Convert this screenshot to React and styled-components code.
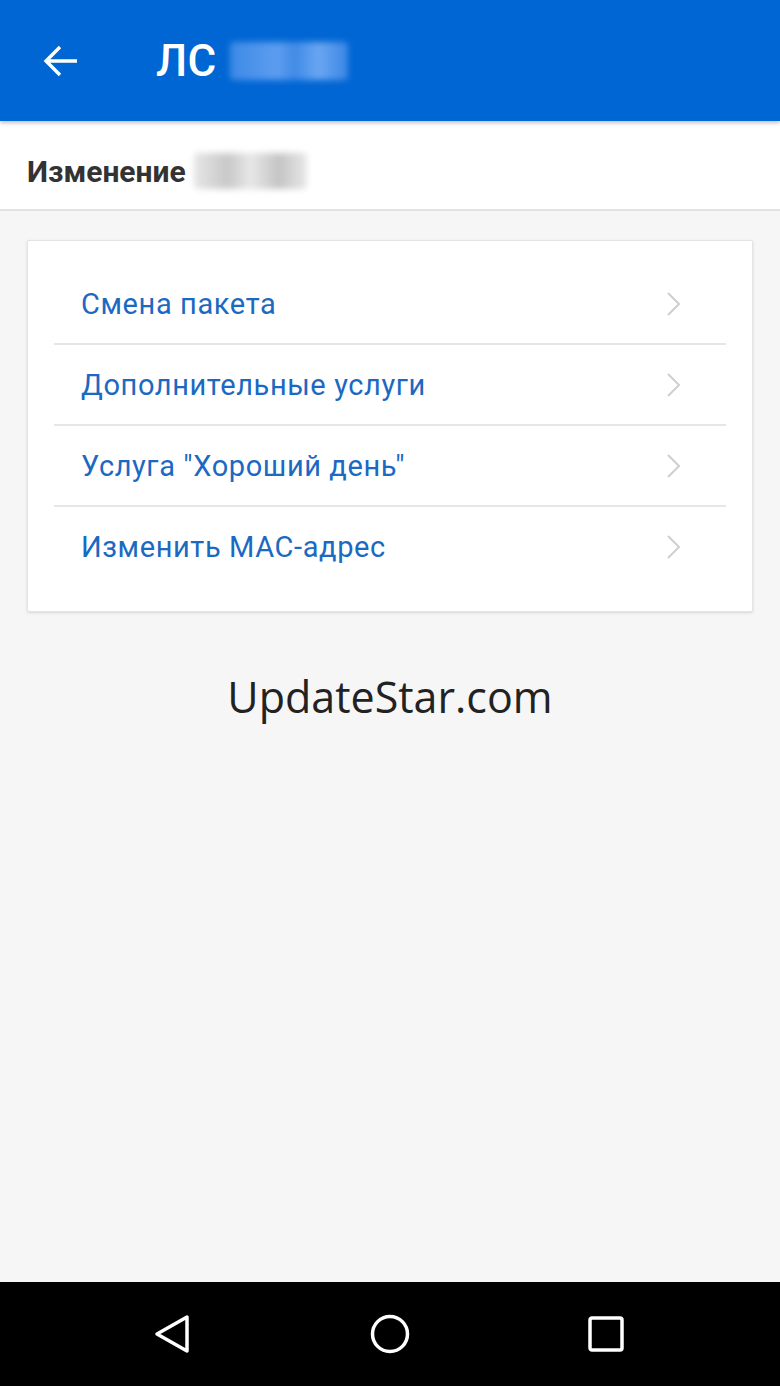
import React from "react";
import styled, { createGlobalStyle } from "styled-components";

const Global = createGlobalStyle`
  html, body { margin: 0; padding: 0; }
  body { font-family: Roboto, "Noto Sans", sans-serif; background: #f6f6f6; }
  * { box-sizing: border-box; }
`;

const Screen = styled.div`
  width: 780px;
  height: 1386px;
  display: flex;
  flex-direction: column;
  background: #f6f6f6;
  overflow: hidden;
`;

const AppBar = styled.header`
  height: 121px;
  flex: none;
  background: #0066d3;
  display: flex;
  align-items: center;
  padding-left: 42px;
  box-shadow: 0 2px 4px rgba(0, 0, 0, 0.25);
  position: relative;
  z-index: 2;
`;

const IconButton = styled.div`
  width: 38px;
  height: 38px;
  display: flex;
  align-items: center;
  justify-content: center;
  margin-right: 76px;
`;

const Title = styled.h1`
  margin: 0;
  color: #fff;
  font-family: Roboto, sans-serif;
  font-weight: 500;
  font-size: 44px;
  letter-spacing: 0.3px;
  display: flex;
  align-items: center;
  gap: 14px;
`;

const Blur = styled.span`
  display: inline-block;
  width: ${(p) => p.$w}px;
  height: ${(p) => p.$h}px;
  background: ${(p) => p.$bg};
  filter: blur(3px);
  border-radius: 4px;
`;

const SubHeader = styled.div`
  height: 90px;
  flex: none;
  background: #fff;
  border-bottom: 2px solid #e2e2e2;
  display: flex;
  align-items: center;
  padding: 12px 0 0 27px;
  gap: 8px;
  font-size: 30px;
  font-weight: 700;
  color: #333;
`;

const Content = styled.main`
  flex: 1;
  padding: 29px 27px 0 27px;
  display: flex;
  flex-direction: column;
`;

const Card = styled.div`
  background: #fff;
  border: 1px solid #e4e4e4;
  border-radius: 2px;
  box-shadow: 0 1px 3px rgba(0, 0, 0, 0.12);
  padding: 23px 26px 24px 26px;
`;

const Row = styled.div`
  height: ${(p) => (p.$last ? 80 : 81)}px;
  display: flex;
  align-items: center;
  justify-content: space-between;
  padding: 0 44px 0 27px;
  border-bottom: ${(p) => (p.$last ? "none" : "2px solid #e6e6e6")};
`;

const RowLabel = styled.span`
  font-size: 29px;
  color: #1b69c2;
  font-family: Roboto, sans-serif;
  letter-spacing: 0.6px;
`;

const Watermark = styled.div`
  margin-top: 55px;
  text-align: center;
  font-family: "Open Sans", "Noto Sans", sans-serif;
  font-size: 43px;
  color: #222;
`;

const NavBar = styled.nav`
  height: 104px;
  flex: none;
  background: #000;
  display: grid;
  grid-template-columns: repeat(3, 216px);
  justify-content: center;
  align-items: center;
  justify-items: center;
`;

const Chevron = () => (
  <svg width="16" height="26" viewBox="0 0 16 26">
    <path d="M2 2 L13 13 L2 24" fill="none" stroke="#cfcfcf" strokeWidth="2" />
  </svg>
);

const items = [
  "Смена пакета",
  "Дополнительные услуги",
  'Услуга "Хороший день"',
  "Изменить MAC-адрес",
];

export default function App() {
  return (
    <Screen>
      <Global />
      <AppBar>
        <IconButton>
          <svg width="36" height="36" viewBox="0 0 36 36">
            <path
              d="M34 18 H4 M17 4 L3 18 L17 32"
              fill="none"
              stroke="#fff"
              strokeWidth="3.4"
              strokeLinejoin="miter"
            />
          </svg>
        </IconButton>
        <Title>
          ЛС
          <Blur $w={118} $h={38} $bg="linear-gradient(90deg,#3d8ae6 0%,#5d9df0 40%,#3f8be6 55%,#6aa6f2 75%,#3a87e4 100%)" />
        </Title>
      </AppBar>
      <SubHeader>
        Изменение
        <Blur $w={113} $h={36} $bg="linear-gradient(90deg,#e6e6e6 0%,#c8c8c8 30%,#e8e8e8 50%,#c4c4c4 75%,#e8e8e8 100%)" />
      </SubHeader>
      <Content>
        <Card>
          {items.map((t, i) => (
            <Row key={t} $last={i === items.length - 1}>
              <RowLabel>{t}</RowLabel>
              <Chevron />
            </Row>
          ))}
        </Card>
        <Watermark>UpdateStar.com</Watermark>
      </Content>
      <NavBar>
        <svg width="40" height="40" viewBox="0 0 40 40">
          <path d="M33 3 L3 20 L33 37 Z" fill="none" stroke="#fff" strokeWidth="3.5" strokeLinejoin="round" />
        </svg>
        <svg width="42" height="42" viewBox="0 0 42 42">
          <circle cx="21" cy="21" r="17.5" fill="none" stroke="#fff" strokeWidth="3.5" />
        </svg>
        <svg width="36" height="36" viewBox="0 0 36 36">
          <rect x="2" y="2" width="32" height="32" rx="2" fill="none" stroke="#fff" strokeWidth="3.5" />
        </svg>
      </NavBar>
    </Screen>
  );
}
